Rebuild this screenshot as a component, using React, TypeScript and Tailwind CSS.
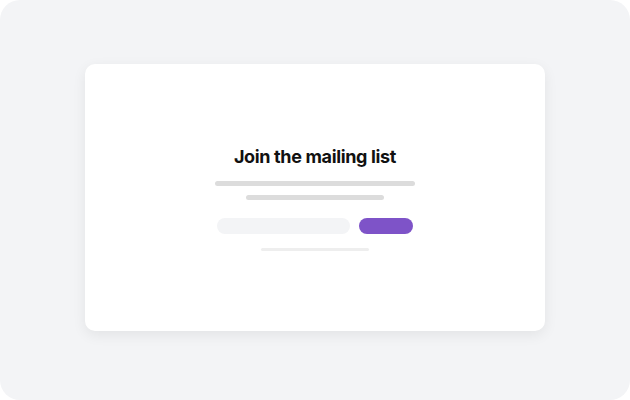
export default function App() {
  return (
    <div className="w-[630px] h-[400px] bg-white">
      <div className="w-full h-full bg-[#f3f4f6] rounded-[20px] flex items-start justify-center pt-[64px]">
        <div className="w-[460px] h-[267px] bg-white rounded-[10px] shadow-[0_4px_14px_rgba(0,0,0,0.07)] flex flex-col items-center justify-center pt-[2px]">
          <h1 className="text-[18px] font-bold text-[#111111] tracking-[-0.35px] leading-[22px] font-['Inter',sans-serif]">
            Join the mailing list
          </h1>
          <div className="mt-[13px] w-[200px] h-[5px] rounded-full bg-[#dcdcdc]" />
          <div className="mt-[9px] w-[138px] h-[5px] rounded-full bg-[#dcdcdc]" />
          <div className="mt-[18px] flex items-center gap-[9px]">
            <div className="w-[133px] h-[16px] rounded-full bg-[#f3f4f6]" />
            <div className="w-[54px] h-[16px] rounded-full bg-[#7e53c8]" />
          </div>
          <div className="mt-[14px] w-[108px] h-[3px] rounded-full bg-[#eeeeee]" />
        </div>
      </div>
    </div>
  );
}
